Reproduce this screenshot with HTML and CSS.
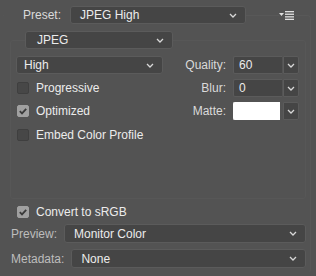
FILE: index.html
```html
<!DOCTYPE html>
<html lang="en">
<head>
  <meta charset="UTF-8">
  <title>Save for Web - Settings</title>
  <link rel="stylesheet" href="styles.css">
</head>
<body>
  <fieldset class="panel">
    <legend class="preset-row">
      <span class="label">Preset:</span>
      <div class="select preset-select">
        <span>JPEG High</span>
        <svg class="chev" width="8" height="5" viewBox="0 0 8 5"><path d="M1 1l3 3 3-3" /></svg>
      </div>
    </legend>
    <button class="menu-btn" aria-label="Options">
      <svg width="16" height="10" viewBox="0 0 16 10">
        <path class="tri" d="M0 3h5l-2.5 3z" />
        <rect x="6" y="1" width="9" height="1.3" />
        <rect x="6" y="3.6" width="9" height="1.3" />
        <rect x="6" y="6.2" width="9" height="1.3" />
        <rect x="6" y="8.7" width="9" height="1.3" />
      </svg>
    </button>

    <fieldset class="group">
      <legend class="format">
        <div class="select format-select">
          <span>JPEG</span>
          <svg class="chev" width="8" height="5" viewBox="0 0 8 5"><path d="M1 1l3 3 3-3" /></svg>
        </div>
      </legend>

      <div class="row first">
        <div class="select quality-select">
          <span>High</span>
          <svg class="chev" width="8" height="5" viewBox="0 0 8 5"><path d="M1 1l3 3 3-3" /></svg>
        </div>
        <div class="field-wrap">
          <span class="label">Quality:</span>
          <div class="field"><span class="input">60</span><span class="arrow"><svg class="chev" width="8" height="5" viewBox="0 0 8 5"><path d="M1 1l3 3 3-3" /></svg></span></div>
        </div>
      </div>

      <div class="row">
        <label class="check"><span class="box"></span>Progressive</label>
        <div class="field-wrap">
          <span class="label">Blur:</span>
          <div class="field"><span class="input">0</span><span class="arrow"><svg class="chev" width="8" height="5" viewBox="0 0 8 5"><path d="M1 1l3 3 3-3" /></svg></span></div>
        </div>
      </div>

      <div class="row">
        <label class="check"><span class="box checked"><svg width="10" height="10" viewBox="0 0 10 10"><path d="M1.8 5.2l2.2 2.2 4.2-4.6" /></svg></span>Optimized</label>
        <div class="field-wrap">
          <span class="label">Matte:</span>
          <div class="field"><span class="input matte"></span><span class="arrow"><svg class="chev" width="8" height="5" viewBox="0 0 8 5"><path d="M1 1l3 3 3-3" /></svg></span></div>
        </div>
      </div>

      <div class="row last">
        <label class="check"><span class="box"></span>Embed Color Profile</label>
      </div>
    </fieldset>

    <label class="check srgb"><span class="box checked"><svg width="10" height="10" viewBox="0 0 10 10"><path d="M1.8 5.2l2.2 2.2 4.2-4.6" /></svg></span>Convert to sRGB</label>

    <div class="line-row">
      <span class="label dim">Preview:</span>
      <div class="select wide">
        <span>Monitor Color</span>
        <svg class="chev" width="8" height="5" viewBox="0 0 8 5"><path d="M1 1l3 3 3-3" /></svg>
      </div>
    </div>
    <div class="line-row">
      <span class="label dim">Metadata:</span>
      <div class="select wide">
        <span>None</span>
        <svg class="chev" width="8" height="5" viewBox="0 0 8 5"><path d="M1 1l3 3 3-3" /></svg>
      </div>
    </div>
  </fieldset>
</body>
</html>
```

FILE: styles.css
```css
:root {
  --bg: #535353;
  --ctrl: #454545;
  --ctrl-border: #5b5b5b;
  --text: #ececec;
  --label: #dadada;
  --dim: #bdbdbd;
  --line: #585858;
}

* {
  box-sizing: border-box;
}

html, body {
  height: 100%;
  overflow: hidden;
}

body {
  margin: 0;
  background: var(--bg);
  color: var(--text);
  font-family: "Liberation Sans", Arial, sans-serif;
  font-size: 12px;
}

fieldset {
  margin: 0;
  padding: 0;
  min-width: 0;
}

legend {
  padding: 0;
}

.panel {
  position: relative;
  margin: 6px 5px 0 3px;
  padding: 0 0 4px 0;
  border: 1px solid var(--line);
  border-radius: 4px;
  border-left-color: transparent;
  border-bottom-color: transparent;
  border-top-left-radius: 0;
}

.preset-row {
  display: flex;
  align-items: center;
  padding-left: 19px;
  background: var(--bg);
}

.label {
  color: var(--label);
}

.dim {
  color: var(--dim);
}

.select {
  display: flex;
  align-items: center;
  justify-content: space-between;
  height: 18px;
  padding: 0 8px 0 9px;
  background: var(--ctrl);
  border: 1px solid var(--ctrl-border);
  border-radius: 3px;
  color: var(--text);
}

.chev path {
  fill: none;
  stroke: #d8d8d8;
  stroke-width: 1.3;
}

.preset-select {
  width: 176px;
  margin-left: 9px;
}

/* sits over the group border line */
.menu-btn {
  position: absolute;
  top: -14px;
  right: 15px;
  padding: 0;
  border: 0;
  background: var(--bg);
  line-height: 0;
}

.menu-btn rect,
.menu-btn .tri {
  fill: #e0e0e0;
}

.group {
  margin: 7px 4px 0 6px;
  height: 168px;
  border: 1px solid #575757;
  border-radius: 3px;
}

.format {
  margin-left: 14px;
}

.format-select {
  width: 148px;
  padding-left: 11px;
}

.row {
  display: flex;
  align-items: center;
  justify-content: space-between;
  height: 18px;
  margin: 5px 6px 0 5px;
}

.row.first {
  margin-top: 7px;
}

.row.last {
  height: 14px;
  margin-top: 8px;
}

.quality-select {
  width: 147px;
  padding-left: 7px;
}

.field-wrap {
  display: flex;
  align-items: center;
  gap: 7px;
}

.field {
  display: flex;
  gap: 1px;
  width: 66px;
  height: 18px;
}

.input {
  flex: 1;
  padding-left: 5px;
  line-height: 16px;
  background: var(--ctrl);
  border: 1px solid var(--ctrl-border);
  border-right: 0;
  border-radius: 2px 0 0 2px;
}

.input.matte {
  margin-right: 2px;
  background: #ffffff;
  border-color: #ffffff;
}

.arrow {
  display: flex;
  align-items: center;
  justify-content: center;
  width: 16px;
  background: var(--ctrl);
  border: 1px solid var(--ctrl-border);
  border-radius: 0 2px 2px 0;
}

.check {
  display: flex;
  align-items: center;
  gap: 7px;
  margin-left: 1px;
  color: var(--text);
}

.box {
  display: flex;
  align-items: center;
  justify-content: center;
  width: 12px;
  height: 12px;
  background: #474747;
  border: 1px solid #3f3f3f;
  border-radius: 2px;
}

.box.checked {
  background: #a0a0a0;
  border-color: #a0a0a0;
}

.box svg path {
  fill: none;
  stroke: #3a3a3a;
  stroke-width: 1.8;
}

.srgb {
  margin: 6px 0 0 13px;
  height: 14px;
}

.line-row {
  display: flex;
  align-items: center;
  gap: 7px;
  height: 19px;
  margin: 5px 4px 0 7px;
}

.line-row + .line-row {
  margin-top: 6px;
}

.wide {
  flex: 1;
  height: 19px;
  padding-left: 9px;
}
```
